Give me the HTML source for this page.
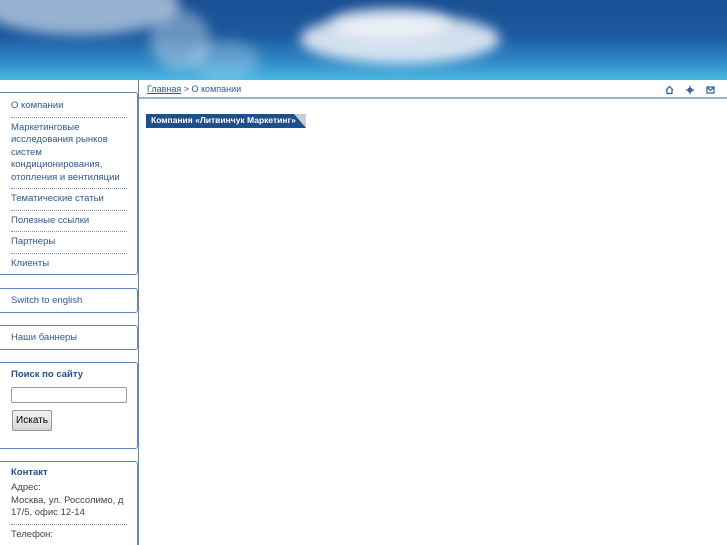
<!DOCTYPE html>
<html><head><meta charset="utf-8"><style>
*{margin:0;padding:0;box-sizing:border-box}
html,body{overflow:hidden}
body{width:727px;height:545px;overflow:hidden;background:#fff;font-family:"Liberation Sans","DejaVu Sans",sans-serif;font-size:9.5px;color:#2b5a92;position:relative}
#hdr{position:absolute;left:0;top:0;width:727px;height:80px;overflow:hidden;
background:linear-gradient(180deg,#1a4f93 0%,#1d5aa0 45%,#2f86c4 75%,#4ab8e2 100%)}
.c{position:absolute;border-radius:50%;filter:blur(6px)}
#vl{position:absolute;left:138px;top:80px;width:1px;height:465px;background:#5d86b6}
#bc{position:absolute;left:139px;top:80px;width:588px;height:19px;border-bottom:2px solid #9cb3cf}
#bc span{position:absolute;left:8px;top:4px;font-size:9px;color:#2b5a92}
.box{position:absolute;left:0;width:138px;border:1px solid #5d86b6;border-left:none;border-radius:0 3px 3px 0;background:#fff;overflow:hidden}
.box a{display:block;padding:0 10px 0 11px;line-height:12.5px}
.sep{margin:4px 10px 4px 11px;border-top:1px dotted #6f8fb8}
h4{font-size:9.5px;color:#1f4f8c;font-weight:bold;padding:0 10px 0 11px}
</style></head><body>
<div id="hdr">
<div class="c" style="left:-20px;top:-25px;width:200px;height:60px;background:rgba(255,255,255,.55)"></div>
<div class="c" style="left:150px;top:10px;width:60px;height:60px;background:rgba(255,255,255,.35)"></div>
<div class="c" style="left:190px;top:40px;width:70px;height:40px;background:rgba(255,255,255,.25)"></div>
<div class="c" style="left:300px;top:14px;width:200px;height:50px;background:rgba(255,255,255,.8)"></div>
<div class="c" style="left:330px;top:8px;width:120px;height:30px;background:rgba(255,255,255,.6)"></div>
</div>
<div id="vl"></div>
<div id="bc"><span><u>Главная</u> &gt; О компании</span>
<svg style="position:absolute;left:526px;top:5px" width="60" height="10" viewBox="0 0 60 10" fill="none" stroke="#2b5a92" stroke-width="1.2">
<path d="M1 5 L4.5 1.5 L8 5 M2 4.5 V8.5 H7 V4.5"/>
<path d="M25 1 V9 M21 5 H29"/><circle cx="25" cy="5" r="1.8"/>
<rect x="42" y="2" width="7" height="6"/><path d="M42 2 L45.5 5.5 L49 2"/></svg>
</div>
<div style="position:absolute;left:146px;top:114px;width:160px;height:14px;background:linear-gradient(90deg,#1d4f8c 0 145px,#c9ced6 145px)"></div>
<svg style="position:absolute;left:286px;top:114px" width="20" height="14"><polygon points="0,0 8,0 20,14 0,14" fill="#1d4f8c"/></svg>
<div style="position:absolute;left:151px;top:115px;font-size:8.5px;font-weight:bold;color:#fff">Компания «Литвинчук Маркетинг»</div>
<div class="box" style="top:92px;height:183px;padding-top:7px">
<a>О компании</a><div class="sep"></div>
<a>Маркетинговые исследования рынков систем кондиционирования, отопления и вентиляции</a><div class="sep"></div>
<a>Тематические статьи</a><div class="sep"></div>
<a>Полезные ссылки</a><div class="sep"></div>
<a>Партнеры</a><div class="sep"></div>
<a>Клиенты</a></div>
<div class="box" style="top:288px;height:25px;padding-top:6px"><a>Switch to english</a></div>
<div class="box" style="top:325px;height:25px;padding-top:6px"><a>Наши баннеры</a></div>
<div class="box" style="top:362px;height:87px;padding-top:6px"><h4>Поиск по сайту</h4>
<div style="margin:7px 0 0 11px;width:116px;height:16px;border:1px solid #999;border-radius:2px"></div>
<div style="margin:7px 0 0 12px;width:40px;height:21px;border:1px solid #999;border-radius:2px;background:linear-gradient(#f2f2f2,#d8d8d8);color:#000;font-size:10px;text-align:center;line-height:19px">Искать</div></div>
<div class="box" style="top:461px;height:90px;padding-top:5px"><h4>Контакт</h4>
<div style="padding:4px 10px 0 11px;color:#444;line-height:12.5px">Адрес:<br>Москва, ул. Россолимо, д 17/5, офис 12-14</div><div class="sep"></div>
<div style="padding:0 10px 0 11px;color:#444;line-height:12.5px">Телефон:</div></div>
</body></html>
